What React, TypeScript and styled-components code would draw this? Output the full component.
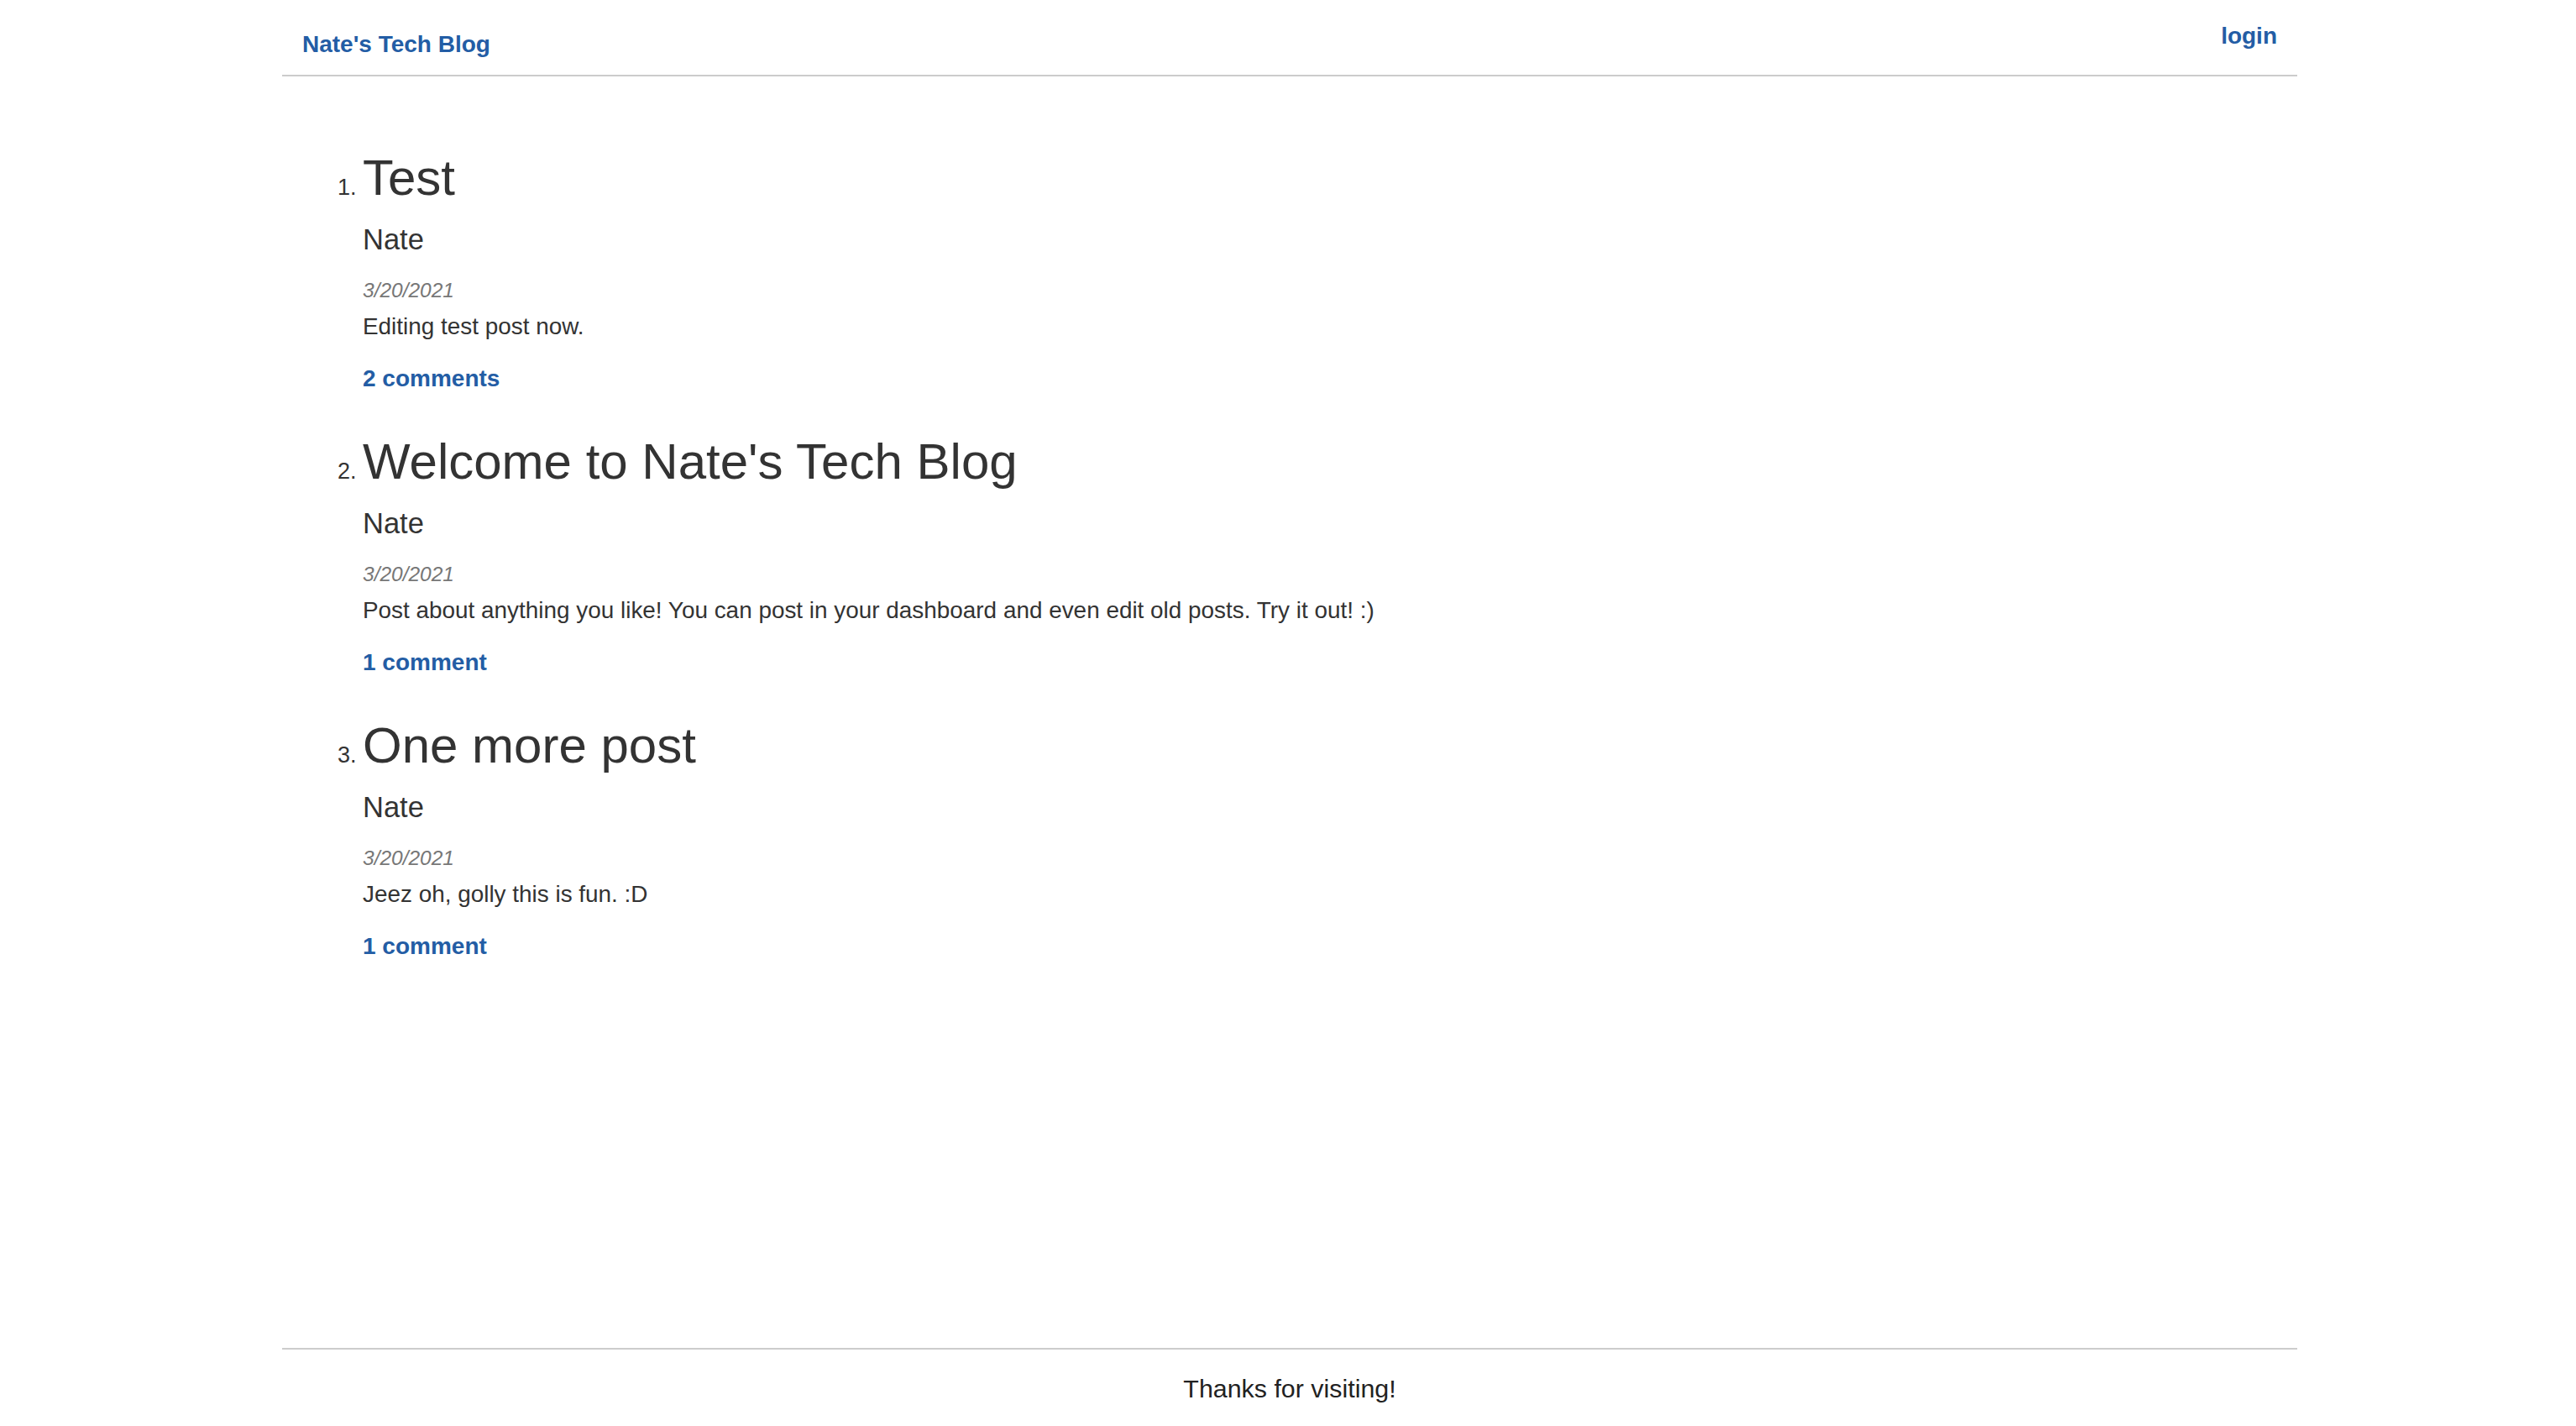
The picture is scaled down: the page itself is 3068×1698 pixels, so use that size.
import React from "react";
import styled, { createGlobalStyle } from "styled-components";

type Post = {
  id: number;
  title: string;
  author: string;
  date: string;
  body: string;
  comments: number;
};

const posts: Post[] = [
  { id: 1, title: "Test", author: "Nate", date: "3/20/2021", body: "Editing test post now.", comments: 2 },
  {
    id: 2,
    title: "Welcome to Nate's Tech Blog",
    author: "Nate",
    date: "3/20/2021",
    body: "Post about anything you like! You can post in your dashboard and even edit old posts. Try it out! :)",
    comments: 1,
  },
  { id: 3, title: "One more post", author: "Nate", date: "3/20/2021", body: "Jeez oh, golly this is fun. :D", comments: 1 },
];

const GlobalStyle = createGlobalStyle`
  html, body {
    margin: 0;
    padding: 0;
    background: #fff;
  }
  body {
    font-family: "Liberation Sans", Arial, sans-serif;
    color: #333;
  }
`;

const Page = styled.div`
  width: 2400px;
  margin: 0 calc(50% - 1202px) 0 calc(50% - 1198px);
  min-height: 100vh;
  display: flex;
  flex-direction: column;
`;

const Header = styled.header`
  height: 89px;
  display: flex;
  justify-content: space-between;
  align-items: flex-start;
  padding: 0 24px;
  border-bottom: 2px solid #ccc;
`;

const NavLink = styled.a<{ $top: number }>`
  display: block;
  padding-top: ${(p) => p.$top}px;
  font-size: 28px;
  line-height: 32px;
  font-weight: bold;
  color: #235da5;
  text-decoration: none;
  cursor: pointer;
`;

const Main = styled.main`
  flex: 1;
  padding: 88px 24px 0;
`;

const PostList = styled.ol`
  margin: 0;
  padding-left: 72px;
`;

const PostItem = styled.li`
  font-size: 28px;
  line-height: 32px;
  margin-bottom: 50px;
  &::marker {
    font-size: 27px;
  }
`;

const Title = styled.h2`
  margin: 0;
  font-size: 60px;
  line-height: 66px;
  font-weight: normal;
  color: #333;
`;

const Author = styled.h3`
  margin: 20px 0 0;
  font-size: 34.5px;
  line-height: 40px;
  font-weight: normal;
`;

const PostDate = styled.p`
  margin: 27px 0 0;
  font-size: 24.5px;
  line-height: 28px;
  font-style: italic;
  color: #777;
`;

const Body = styled.p`
  margin: 13px 0 0;
  font-size: 27.9px;
  line-height: 32px;
`;

const CommentLink = styled.a`
  display: block;
  margin-top: 30px;
  font-size: 28px;
  line-height: 32px;
  font-weight: bold;
  color: #235da5;
  text-decoration: none;
  cursor: pointer;
`;

const Footer = styled.footer`
  border-top: 2px solid #ccc;
  padding: 27.5px 0;
  text-align: center;
  font-size: 30.4px;
  line-height: 36px;
  color: #222;
`;

const App: React.FC = () => {
  return (
    <>
      <GlobalStyle />
      <Page>
        <Header>
          <NavLink $top={37}>Nate's Tech Blog</NavLink>
          <NavLink $top={27}>login</NavLink>
        </Header>
        <Main>
          <PostList>
            {posts.map((post) => (
              <PostItem key={post.id}>
                <Title>{post.title}</Title>
                <Author>{post.author}</Author>
                <PostDate>{post.date}</PostDate>
                <Body>{post.body}</Body>
                <CommentLink>
                  {post.comments} {post.comments === 1 ? "comment" : "comments"}
                </CommentLink>
              </PostItem>
            ))}
          </PostList>
        </Main>
        <Footer>Thanks for visiting!</Footer>
      </Page>
    </>
  );
};

export default App;
